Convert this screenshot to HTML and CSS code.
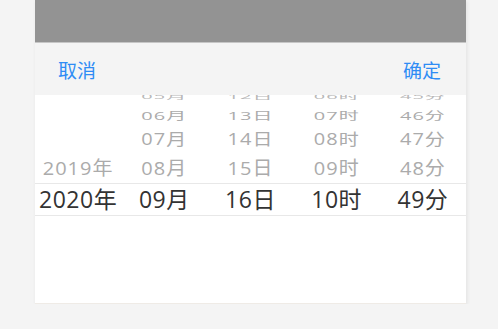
FILE: index.html
```html
<!DOCTYPE html>
<html lang="zh-CN">
<head>
    <meta charset="UTF-8">
    <meta name="viewport" content="width=device-width, initial-scale=1.0">
    <title>日期选择</title>
    <link rel="stylesheet" href="styles.css">
</head>
<body>
  <div class="sheet">
    <!-- dimmed page behind the popup -->
    <div class="mask"></div>

    <!-- Toolbar -->
    <div class="toolbar">
      <span class="btn">取消</span>
      <span class="btn">确定</span>
    </div>

    <!-- Wheel columns -->
    <div class="picker">
      <div class="column">
        <div class="item r4"></div>
        <div class="item r3"></div>
        <div class="item r2"></div>
        <div class="item r1"><span>2019年</span></div>
        <div class="item current"><span>2020年</span></div>
      </div>
      <div class="column">
        <div class="item r4"><span>05月</span></div>
        <div class="item r3"><span>06月</span></div>
        <div class="item r2"><span>07月</span></div>
        <div class="item r1"><span>08月</span></div>
        <div class="item current"><span>09月</span></div>
      </div>
      <div class="column">
        <div class="item r4"><span>12日</span></div>
        <div class="item r3"><span>13日</span></div>
        <div class="item r2"><span>14日</span></div>
        <div class="item r1"><span>15日</span></div>
        <div class="item current"><span>16日</span></div>
      </div>
      <div class="column">
        <div class="item r4"><span>06时</span></div>
        <div class="item r3"><span>07时</span></div>
        <div class="item r2"><span>08时</span></div>
        <div class="item r1"><span>09时</span></div>
        <div class="item current"><span>10时</span></div>
      </div>
      <div class="column">
        <div class="item r4"><span>45分</span></div>
        <div class="item r3"><span>46分</span></div>
        <div class="item r2"><span>47分</span></div>
        <div class="item r1"><span>48分</span></div>
        <div class="item current"><span>49分</span></div>
      </div>
    </div>
  </div>
</body>
</html>
```

FILE: styles.css
```css
body {
    margin: 0;
    background-color: #f4f4f4;
    font-family: 'Open Sans', 'Noto Sans CJK SC', sans-serif;
}

.sheet {
    width: 431px;
    height: 303px;
    margin-left: 35px;
    background-color: #ffffff;
    border-bottom: 1px solid #efebe6;
    box-shadow: 1px 1px 4px rgba(0, 0, 0, 0.08);
    overflow: hidden;
}

.mask {
    height: 42px;
    background-color: #939393;
    border-bottom: 1px solid #c6c6c6;
}

.toolbar {
    height: 52px;
    padding: 0 25px 0 23px;
    display: flex;
    justify-content: space-between;
    align-items: center;
    background-color: #f4f4f4;
}

.btn {
    font-family: 'Noto Sans CJK SC', sans-serif;
    font-size: 19px;
    color: #2f8cf4;
}

.picker {
    height: 208px;
    display: flex;
    overflow: hidden;
}

.column {
    flex: 1;
    margin-top: -7px;
}

.item {
    display: flex;
    justify-content: center;
    align-items: center;
    font-size: 20px;
    letter-spacing: 1px;
    color: #ababab;
}

.item span {
    display: block;
    line-height: 1;
    white-space: nowrap;
}

.r4 {
    height: 18px;
    color: #b8b8b8;
}

.r4 span {
    transform: scaleY(0.35);
}

.r3 {
    height: 20px;
}

.r3 span {
    transform: scaleY(0.55);
}

.r2 {
    height: 26px;
}

.r2 span {
    transform: scaleY(0.8);
}

.r1 {
    height: 31px;
}

.r1 span {
    transform: scaleY(0.95);
}

.current {
    height: 31px;
    font-size: 23px;
    letter-spacing: 0.5px;
    color: #333333;
    border-top: 1px solid #e8e8e8;
    border-bottom: 1px solid #e8e8e8;
}
```
